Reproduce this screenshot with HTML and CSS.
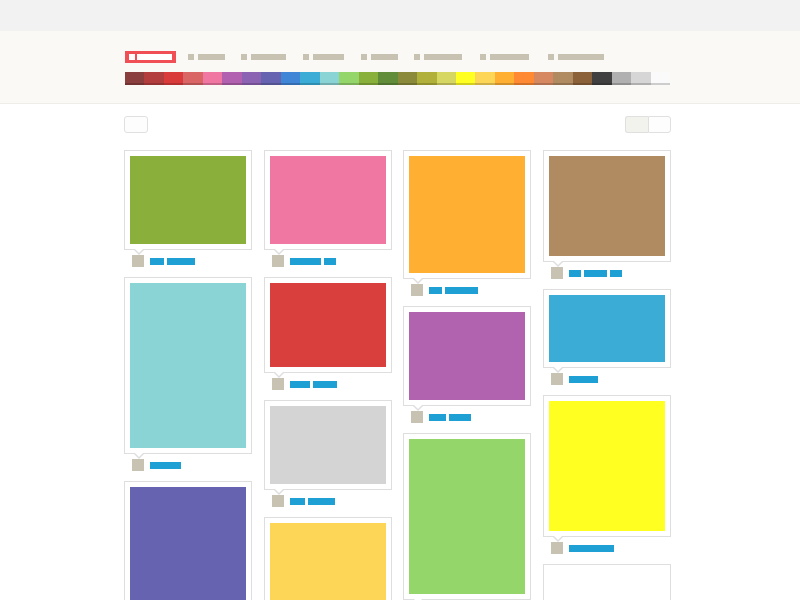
FILE: index.html
```html
<!DOCTYPE html>
<html lang="en">
<head>
    <meta charset="UTF-8">
    <meta name="viewport" content="width=device-width, initial-scale=1.0">
    <title>Colour Board</title>
    <link rel="stylesheet" href="styles.css">
</head>
<body>
    <!-- Top bar -->
    <div class="topbar"></div>

    <!-- Header with nav and colour strip -->
    <div class="header">
        <div class="wrap">
            <ul class="nav">
                <li class="nav-item active"><span class="dot"></span><span class="bar" style="width: 35px"></span></li>
                <li class="nav-item"><span class="dot"></span><span class="bar" style="width: 27px"></span></li>
                <li class="nav-item"><span class="dot"></span><span class="bar" style="width: 35px"></span></li>
                <li class="nav-item"><span class="dot"></span><span class="bar" style="width: 31px"></span></li>
                <li class="nav-item"><span class="dot"></span><span class="bar" style="width: 27px"></span></li>
                <li class="nav-item"><span class="dot"></span><span class="bar" style="width: 38px"></span></li>
                <li class="nav-item"><span class="dot"></span><span class="bar" style="width: 39px"></span></li>
                <li class="nav-item"><span class="dot"></span><span class="bar" style="width: 46px"></span></li>
            </ul>
            <div class="swatches" id="swatches"></div>
        </div>
    </div>

    <div class="wrap">
        <!-- Toolbar -->
        <div class="toolbar">
            <button class="btn"></button>
            <div class="btn-group">
                <button class="btn on"></button>
                <button class="btn"></button>
            </div>
        </div>

        <!-- Pin grid -->
        <div class="grid">
            <div class="col">
                <div class="pin">
                    <div class="card"><div class="pic" style="height: 88px; background: #8aaf3b"></div></div>
                    <div class="meta"><span class="avatar"></span><span class="tag" style="width: 14px"></span><span class="tag" style="width: 28px"></span></div>
                </div>
                <div class="pin">
                    <div class="card"><div class="pic" style="height: 165px; background: #8ad4d6"></div></div>
                    <div class="meta"><span class="avatar"></span><span class="tag" style="width: 31px"></span></div>
                </div>
                <div class="pin">
                    <div class="card"><div class="pic" style="height: 140px; background: #6664b0"></div></div>
                </div>
            </div>
            <div class="col">
                <div class="pin">
                    <div class="card"><div class="pic" style="height: 88px; background: #ef77a2"></div></div>
                    <div class="meta"><span class="avatar"></span><span class="tag" style="width: 31px"></span><span class="tag" style="width: 12px"></span></div>
                </div>
                <div class="pin">
                    <div class="card"><div class="pic" style="height: 84px; background: #d93f3d"></div></div>
                    <div class="meta"><span class="avatar"></span><span class="tag" style="width: 20px"></span><span class="tag" style="width: 24px"></span></div>
                </div>
                <div class="pin">
                    <div class="card"><div class="pic" style="height: 78px; background: #d4d4d4"></div></div>
                    <div class="meta"><span class="avatar"></span><span class="tag" style="width: 15px"></span><span class="tag" style="width: 27px"></span></div>
                </div>
                <div class="pin">
                    <div class="card"><div class="pic" style="height: 120px; background: #fdd657"></div></div>
                </div>
            </div>
            <div class="col">
                <div class="pin">
                    <div class="card"><div class="pic" style="height: 117px; background: #ffb033"></div></div>
                    <div class="meta"><span class="avatar"></span><span class="tag" style="width: 13px"></span><span class="tag" style="width: 33px"></span></div>
                </div>
                <div class="pin">
                    <div class="card"><div class="pic" style="height: 88px; background: #b263b0"></div></div>
                    <div class="meta"><span class="avatar"></span><span class="tag" style="width: 17px"></span><span class="tag" style="width: 22px"></span></div>
                </div>
                <div class="pin">
                    <div class="card"><div class="pic" style="height: 155px; background: #95d66b"></div></div>
                </div>
            </div>
            <div class="col">
                <div class="pin">
                    <div class="card"><div class="pic" style="height: 100px; background: #b08a61"></div></div>
                    <div class="meta"><span class="avatar"></span><span class="tag" style="width: 12px"></span><span class="tag" style="width: 23px"></span><span class="tag" style="width: 12px"></span></div>
                </div>
                <div class="pin">
                    <div class="card"><div class="pic" style="height: 67px; background: #3aacd6"></div></div>
                    <div class="meta"><span class="avatar"></span><span class="tag" style="width: 29px"></span></div>
                </div>
                <div class="pin">
                    <div class="card"><div class="pic" style="height: 130px; background: #ffff21"></div></div>
                    <div class="meta"><span class="avatar"></span><span class="tag" style="width: 45px"></span></div>
                </div>
                <div class="pin">
                    <div class="card empty"></div>
                </div>
            </div>
        </div>
    </div>

    <script>
        // colour filter strip
        const colours = [
            '#8b3e3e', '#b33d3d', '#d93b3b', '#d96565', '#ef77a2', '#b261b0', '#8c62b3',
            '#6664b0', '#3f86d6', '#3aacd6', '#8ad4d6', '#95d66b', '#89b03a', '#618c3a',
            '#8a8a3a', '#b0b03a', '#d6d663', '#ffff21', '#fdd657', '#ffb033', '#ff8a33',
            '#d68961', '#b08a61', '#8b6139', '#404040', '#b0b0b0', '#d6d6d6', '#fafafa'
        ];
        const strip = document.getElementById('swatches');
        colours.forEach(c => {
            const s = document.createElement('span');
            s.className = 'swatch';
            s.style.background = c;
            strip.appendChild(s);
        });
    </script>
</body>
</html>
```

FILE: styles.css
```css
body {
    font-family: "Liberation Sans", Arial, sans-serif;
    margin: 0;
    padding: 0;
    background-color: #fff;
    height: 600px;
    overflow: hidden;
}

.wrap {
    width: 547px;
    margin-left: 124px;
}

.topbar {
    height: 31px;
    background-color: #f2f2f2;
}

.header {
    background-color: #faf9f5;
    border-bottom: 1px solid #efede8;
    padding: 19px 0 18px;
}

/* nav */
.nav {
    list-style: none;
    margin: 0 0 0 1px;
    padding: 0;
    display: flex;
    align-items: center;
    height: 13px;
}

.nav-item {
    display: flex;
    align-items: center;
    margin-right: 16px;
}

.nav-item .dot {
    width: 6px;
    height: 6px;
    background-color: #c8c2b2;
    margin-right: 4px;
}

.nav-item .bar {
    height: 6px;
    background-color: #c8c2b2;
}

.nav-item.active {
    background-color: #ef4f55;
    padding: 3px 4px;
    margin-right: 12px;
}

.nav-item.active .dot {
    background-color: #fff;
    margin-right: 2px;
}

.nav-item.active .bar {
    background-color: #fff;
}

.nav-item:nth-child(2) { margin-right: 16px; }
.nav-item:nth-child(3) { margin-right: 17px; }
.nav-item:nth-child(4) { margin-right: 17px; }
.nav-item:nth-child(5) { margin-right: 16px; }
.nav-item:nth-child(6) { margin-right: 18px; }
.nav-item:nth-child(7) { margin-right: 19px; }

/* colour strip */
.swatches {
    display: flex;
    margin-top: 9px;
    margin-left: 1px;
    width: 545px;
    height: 13px;
}

.swatch {
    flex: 1;
    box-shadow: inset 0 -2px 0 rgba(0, 0, 0, 0.18);
}

/* toolbar */
.toolbar {
    display: flex;
    justify-content: space-between;
    margin-top: 12px;
}

.btn {
    width: 24px;
    height: 17px;
    padding: 0;
    border: 1px solid #e0e0e0;
    border-radius: 3px;
    background-color: #fdfdfd;
}

.btn-group {
    display: flex;
}

.btn-group .btn {
    width: 23px;
    border-radius: 0 3px 3px 0;
}

.btn-group .btn.on {
    background-color: #f3f3ee;
    border-radius: 3px 0 0 3px;
    border-right: none;
}

/* grid */
.grid {
    display: grid;
    grid-template-columns: repeat(4, 128px);
    column-gap: 11.67px;
    margin-top: 17px;
}

.col {
    display: flex;
    flex-direction: column;
    gap: 10px;
}

.card {
    position: relative;
    border: 1px solid #dedede;
    padding: 5px;
    background-color: #fff;
}

.card::before,
.card::after {
    content: "";
    position: absolute;
    left: 9px;
    border: 5px solid transparent;
}

.card::before {
    bottom: -11px;
    border-top-color: #dedede;
}

.card::after {
    bottom: -9px;
    border-top-color: #fff;
}

.card.empty {
    height: 40px;
}

.card.empty::before,
.card.empty::after {
    display: none;
}

.pic {
    width: 100%;
}

.meta {
    display: flex;
    align-items: center;
    height: 12px;
    margin-top: 5px;
    padding-left: 8px;
}

.avatar {
    width: 12px;
    height: 12px;
    background-color: #c8c2b2;
    margin-right: 6px;
}

.tag {
    height: 7px;
    background-color: #1ea0d4;
    margin-right: 3px;
}
```
